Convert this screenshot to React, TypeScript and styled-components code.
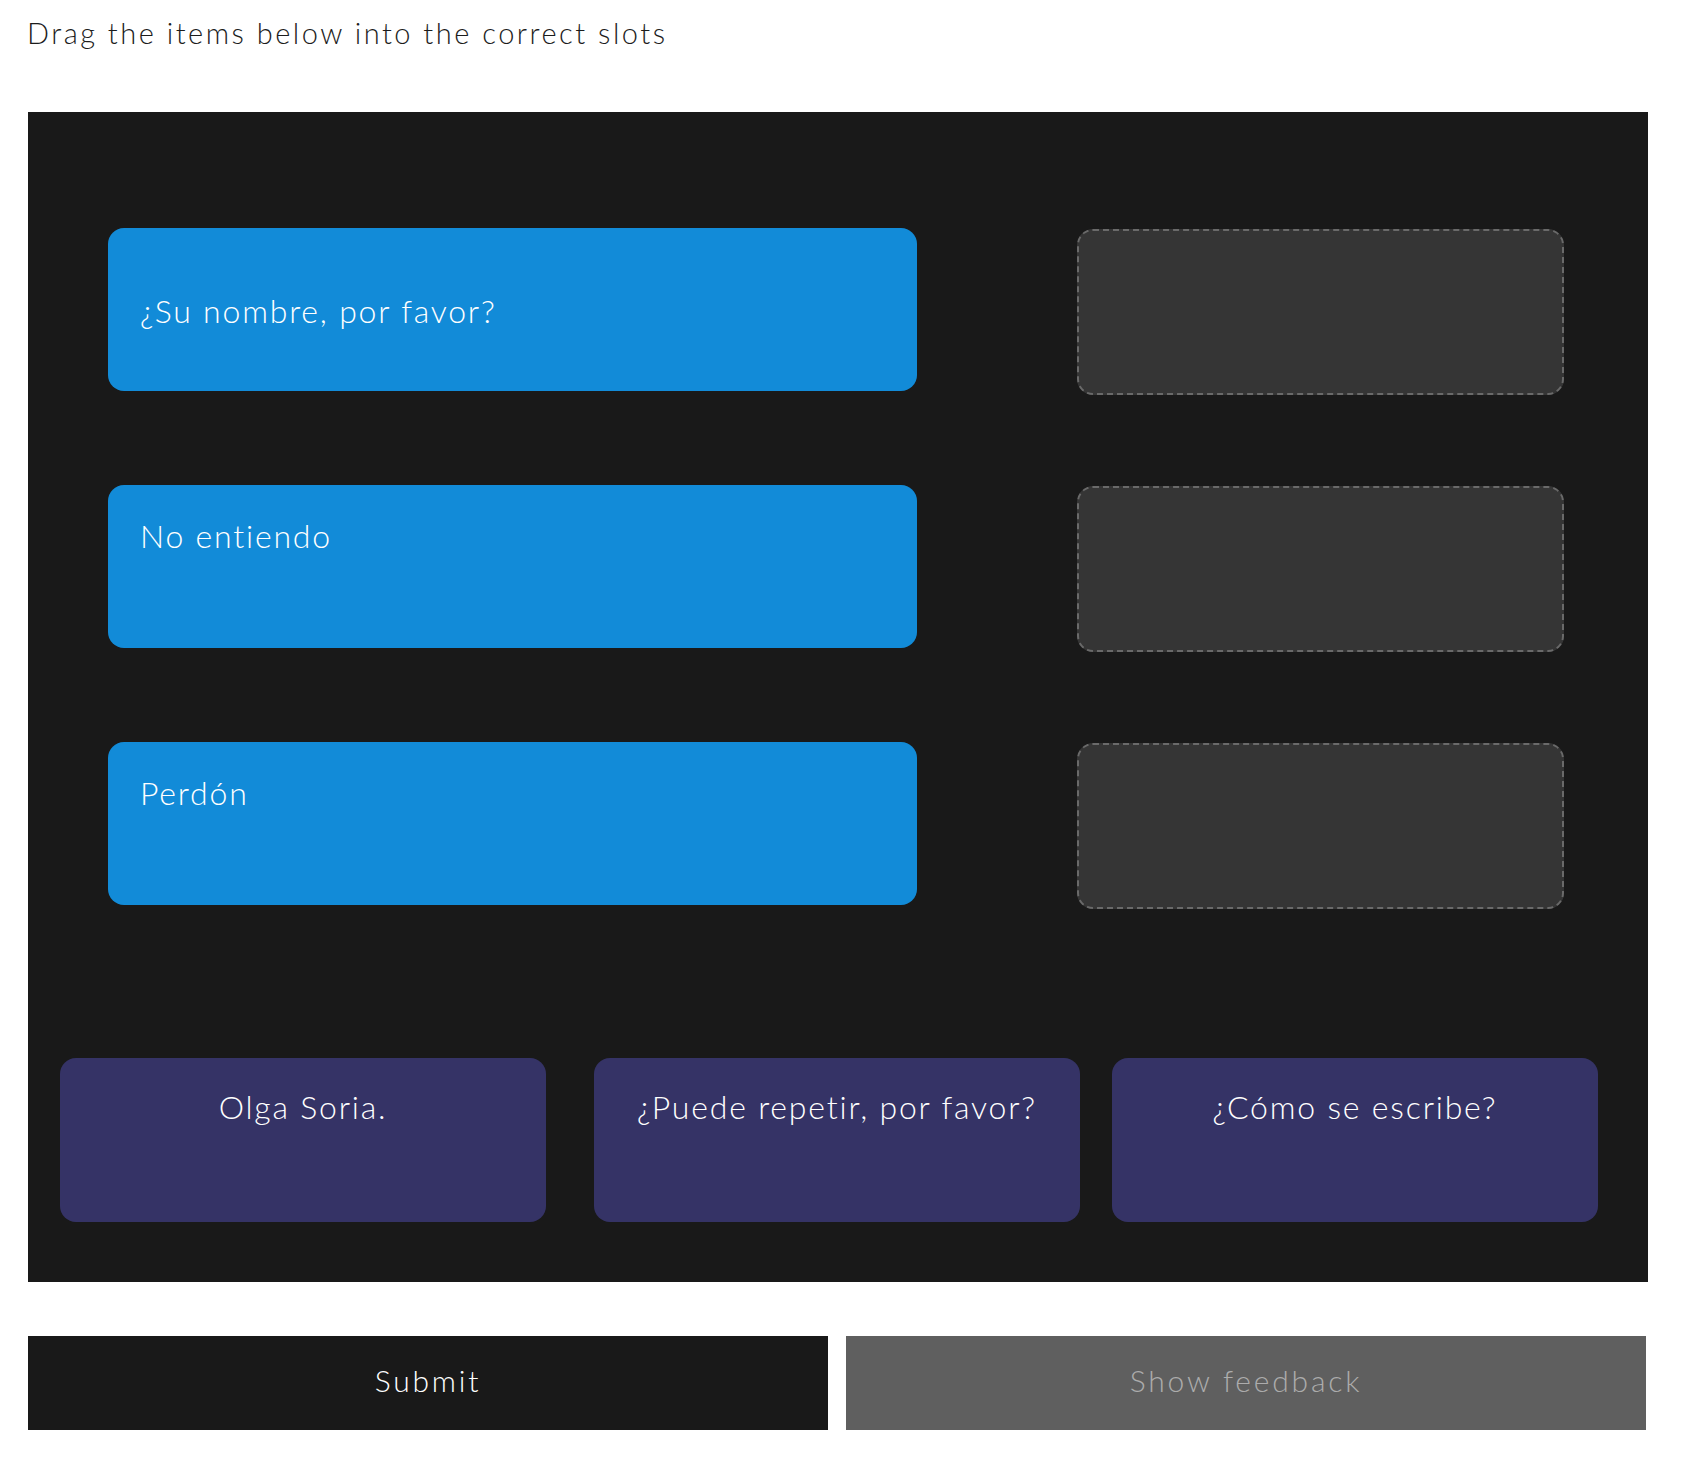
import React from 'react'
import styled, { createGlobalStyle } from 'styled-components'

const GlobalStyle = createGlobalStyle`
  body {
    margin: 0;
    background: #ffffff;
    font-family: Lato, 'Open Sans', sans-serif;
    font-weight: 300;
  }
`

const Page = styled.div`
  width: 1620px;
  padding: 16px 0 0 28px;
`

const Prompt = styled.p`
  margin: 0 0 0 -1px;
  height: 96px;
  font-size: 29px;
  line-height: 1.2;
  letter-spacing: 2.5px;
  color: #1c1c1c;
`

const Board = styled.div`
  background: #191919;
  padding: 116px 0 60px;
`

const Pairs = styled.div`
  display: grid;
  grid-template-columns: 809px 487px;
  justify-content: space-between;
  row-gap: 90px;
  padding: 0 84px 0 80px;
`

const Item = styled.div<{ $centered?: boolean }>`
  display: flex;
  align-items: ${(p) => (p.$centered ? 'center' : 'flex-start')};
  box-sizing: border-box;
  height: 163px;
  padding: ${(p) => (p.$centered ? '4px 32px 0' : '32px 32px 0')};
  border-radius: 16px;
  background: #128bd8;
  color: #ffffff;
  font-size: 32px;
  line-height: 1.2;
  letter-spacing: 1.8px;
`

const Slot = styled.div`
  box-sizing: border-box;
  height: 166px;
  margin-top: 1px;
  border: 2px dashed #6a6a6a;
  border-radius: 16px;
  background: #353535;
`

const Pool = styled.div`
  display: flex;
  margin-top: 149px;
`

const Choice = styled.div<{ $offset: number }>`
  box-sizing: border-box;
  width: 486px;
  height: 164px;
  margin-left: ${(p) => p.$offset}px;
  padding-top: 30px;
  border-radius: 16px;
  background: #353366;
  color: #ffffff;
  font-size: 32px;
  line-height: 1.2;
  letter-spacing: 1.8px;
  text-align: center;
`

const Actions = styled.div`
  display: grid;
  grid-template-columns: 800px 800px;
  column-gap: 18px;
  margin-top: 54px;
`

const ActionButton = styled.button<{ $muted?: boolean }>`
  height: 94px;
  padding: 2px 0 8px;
  border: none;
  border-radius: 0;
  background: ${(p) => (p.$muted ? '#5f5f5f' : '#191919')};
  color: ${(p) => (p.$muted ? '#acacac' : '#ffffff')};
  font-family: inherit;
  font-weight: 300;
  font-size: 30px;
  line-height: 36px;
  letter-spacing: 2.8px;
  text-align: center;
  cursor: pointer;
`

const pairs = [
  { text: '¿Su nombre, por favor?', centered: true },
  { text: 'No entiendo', centered: false },
  { text: 'Perdón', centered: false },
]

const choices = [
  { text: 'Olga Soria.', offset: 32 },
  { text: '¿Puede repetir, por favor?', offset: 48 },
  { text: '¿Cómo se escribe?', offset: 32 },
]

const App = () => {
  return (
    <Page>
      <GlobalStyle />
      <Prompt>Drag the items below into the correct slots</Prompt>
      <Board>
        <Pairs>
          {pairs.map((pair) => (
            <React.Fragment key={pair.text}>
              <Item $centered={pair.centered}>{pair.text}</Item>
              <Slot />
            </React.Fragment>
          ))}
        </Pairs>
        <Pool>
          {choices.map((choice) => (
            <Choice key={choice.text} $offset={choice.offset}>
              {choice.text}
            </Choice>
          ))}
        </Pool>
      </Board>
      <Actions>
        <ActionButton>Submit</ActionButton>
        <ActionButton $muted>Show feedback</ActionButton>
      </Actions>
    </Page>
  )
}

export default App
